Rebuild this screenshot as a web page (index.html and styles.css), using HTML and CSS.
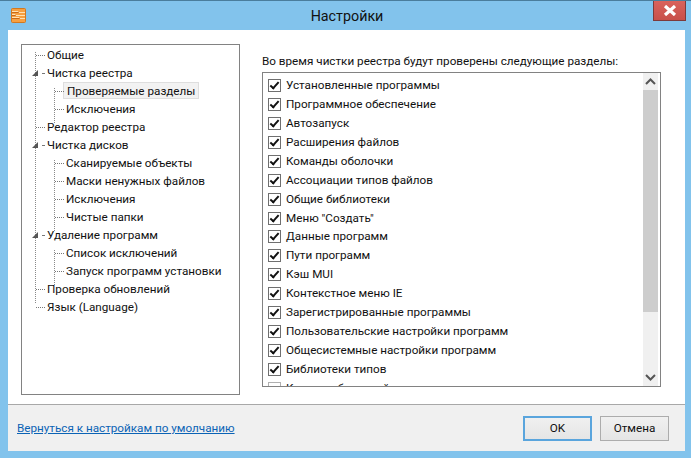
FILE: index.html
```html
<!DOCTYPE html>
<html>

<head>
    <meta charset="utf-8">
    <title>Настройки</title>
    <link rel="stylesheet" href="styles.css">
</head>

<body>
    <div class="window">
        <div class="titlebar">
            <svg class="app-icon" width="15" height="15" viewBox="0 0 15 15">
                <rect x="0.5" y="0.5" width="14" height="14" rx="1" fill="#f7a041" stroke="#d2781f"/>
                <path d="M1 4.5h13M1 7.5h13M1 10.5h13" fill="none" stroke="#c96a16" stroke-width="1"/>
                <path d="M1 3.5h6l1 1h6M1 6.5h3l1 1h9M1 9.5h7l1 1h5" fill="none" stroke="#ffe2b4" stroke-width="1"/>
            </svg>
            <div class="title">Настройки</div>
            <div class="close">
                <svg width="14" height="11" viewBox="0 0 14 11">
                    <path d="M2 1l10 9M12 1l-10 9" stroke="#fff" stroke-width="3.2" fill="none"/>
                </svg>
            </div>
        </div>
        <div class="content">
            <div class="main">
                <div class="tree">
                    <div class="branch">
                        <div class="node">Общие</div>
                        <div class="node open">Чистка реестра</div>
                        <div class="children">
                            <div class="node"><span class="selected">Проверяемые разделы</span></div>
                            <div class="node">Исключения</div>
                        </div>
                        <div class="node">Редактор реестра</div>
                        <div class="node open">Чистка дисков</div>
                        <div class="children">
                            <div class="node">Сканируемые объекты</div>
                            <div class="node">Маски ненужных файлов</div>
                            <div class="node">Исключения</div>
                            <div class="node">Чистые папки</div>
                        </div>
                        <div class="node open">Удаление программ</div>
                        <div class="children">
                            <div class="node">Список исключений</div>
                            <div class="node">Запуск программ установки</div>
                        </div>
                        <div class="node">Проверка обновлений</div>
                        <div class="node">Язык (Language)</div>
                    </div>
                </div>
                <div class="panel">
                    <div class="caption">Во время чистки реестра будут проверены следующие разделы:</div>
                    <div class="listbox">
                        <div class="items">
                            <div class="item"><span class="check"></span>Установленные программы</div>
                            <div class="item"><span class="check"></span>Программное обеспечение</div>
                            <div class="item"><span class="check"></span>Автозапуск</div>
                            <div class="item"><span class="check"></span>Расширения файлов</div>
                            <div class="item"><span class="check"></span>Команды оболочки</div>
                            <div class="item"><span class="check"></span>Ассоциации типов файлов</div>
                            <div class="item"><span class="check"></span>Общие библиотеки</div>
                            <div class="item"><span class="check"></span>Меню "Создать"</div>
                            <div class="item"><span class="check"></span>Данные программ</div>
                            <div class="item"><span class="check"></span>Пути программ</div>
                            <div class="item"><span class="check"></span>Кэш MUI</div>
                            <div class="item"><span class="check"></span>Контекстное меню IE</div>
                            <div class="item"><span class="check"></span>Зарегистрированные программы</div>
                            <div class="item"><span class="check"></span>Пользовательские настройки программ</div>
                            <div class="item"><span class="check"></span>Общесистемные настройки программ</div>
                            <div class="item"><span class="check"></span>Библиотеки типов</div>
                            <div class="item"><span class="check off"></span>Классы объектной модели</div>
                        </div>
                        <div class="scrollbar">
                            <div class="arrow">
                                <svg width="11" height="7" viewBox="0 0 11 7"><path d="M1 6l4.5-4.5L10 6" fill="none" stroke="#555" stroke-width="2"/></svg>
                            </div>
                            <div class="track"><div class="thumb"></div></div>
                            <div class="arrow">
                                <svg width="11" height="7" viewBox="0 0 11 7"><path d="M1 1l4.5 4.5L10 1" fill="none" stroke="#555" stroke-width="2"/></svg>
                            </div>
                        </div>
                    </div>
                </div>
            </div>
            <div class="footer">
                <a class="reset" href="#">Вернуться к настройкам по умолчанию</a>
                <div class="button default">OK</div>
                <div class="button">Отмена</div>
            </div>
        </div>
    </div>
</body>

</html>
```

FILE: styles.css
```css
html, body {
    margin: 0;
    height: 100%;
}

body {
    font-family: Roboto, sans-serif;
    font-size: 11.7px;
    color: #111111;
}

.window {
    box-sizing: border-box;
    width: 691px;
    height: 458px;
    padding: 0 6px 7px 8px;
    display: flex;
    flex-direction: column;
    background-color: #82c3ec;
    border-top: 1px solid #4a7d9c;
    overflow: hidden;
}

.titlebar {
    height: 29px;
    flex: none;
    display: flex;
    align-items: flex-start;
}

.app-icon {
    margin: 7px 0 0 3px;
}

.title {
    flex: 1;
    text-align: center;
    font-size: 14.3px;
    line-height: 30px;
    padding-left: 15px;
}

.close {
    width: 31px;
    height: 19px;
    margin-right: -1px;
    display: flex;
    align-items: center;
    justify-content: center;
    background-image: linear-gradient(#d9625c, #c8504a);
    border: 1px solid #7d3a3a;
    border-top: none;
}

.content {
    flex: 1;
    display: flex;
    flex-direction: column;
    background-color: #ffffff;
    min-height: 0;
}

.main {
    flex: 1;
    display: flex;
    padding: 14px 24px 8px 13px;
    gap: 22px;
    min-height: 0;
}

.tree {
    box-sizing: border-box;
    width: 219px;
    height: 351px;
    padding: 1px 0 0 13px;
    border: 1px solid #828282;
    flex: none;
}

.branch {
    background-image: linear-gradient(#8a8a8a 50%, transparent 50%);
    background-size: 1px 2px;
    background-repeat: repeat-y;
    height: 252px;
    margin-top: 6px;
}

.node {
    position: relative;
    height: 18px;
    line-height: 18px;
    padding-left: 12px;
    white-space: nowrap;
    top: -6px;
}

.node::before {
    content: "";
    position: absolute;
    left: 1px;
    top: 9px;
    width: 9px;
    border-top: 1px dotted #777777;
}

.node.open::before {
    left: 7px;
    width: 2px;
}

.node.open::after {
    content: "";
    position: absolute;
    left: -3px;
    top: 6px;
    border-style: solid;
    border-width: 0 0 6px 6px;
    border-color: transparent transparent #555555 transparent;
}

.children {
    margin-left: 19px;
    background-image: linear-gradient(#8a8a8a 50%, transparent 50%);
    background-size: 1px 2px;
    background-repeat: repeat-y;
}

.selected {
    display: inline-block;
    margin-left: -3px;
    padding: 0 3px;
    height: 17px;
    line-height: 16px;
    box-sizing: border-box;
    background-color: #f2f2f2;
    border: 1px solid #dedede;
}

.panel {
    flex: 1;
    display: flex;
    flex-direction: column;
    min-width: 0;
}

.caption {
    height: 14px;
    line-height: 14px;
    margin: 10px 0 4px 0;
    white-space: nowrap;
}

.listbox {
    box-sizing: border-box;
    height: 315px;
    display: flex;
    border: 1px solid #828282;
    overflow: hidden;
}

.items {
    flex: 1;
    padding: 3px 0 0 5px;
    overflow: hidden;
}

.item {
    height: 18.95px;
    line-height: 19px;
    display: flex;
    align-items: center;
    white-space: nowrap;
}

.check {
    box-sizing: border-box;
    width: 13px;
    height: 13px;
    margin-right: 5px;
    flex: none;
    border: 1px solid #6f6f6f;
    background-color: #ffffff;
    position: relative;
}

.check::after {
    content: "";
    position: absolute;
    left: 3px;
    top: 0;
    width: 3px;
    height: 7px;
    border: solid #111111;
    border-width: 0 2px 2px 0;
    transform: rotate(42deg);
}

.check.off {
    border-color: #b0b0b0;
}

.check.off::after {
    display: none;
}

.scrollbar {
    width: 15px;
    margin-right: 2px;
    flex: none;
    display: flex;
    flex-direction: column;
    background-color: #f0f0f0;
}

.arrow {
    height: 17px;
    flex: none;
    display: flex;
    align-items: center;
    justify-content: center;
}

.track {
    flex: 1;
}

.thumb {
    height: 222px;
    background-color: #cdcdcd;
}

.footer {
    box-sizing: border-box;
    height: 47px;
    flex: none;
    display: flex;
    align-items: center;
    padding: 0 16px 0 9px;
    background-color: #f0f0f0;
    border-top: 1px solid #a8a8a8;
    gap: 8px;
}

.reset {
    color: #0b63b5;
    margin-right: auto;
}

.button {
    box-sizing: border-box;
    width: 69px;
    height: 25px;
    line-height: 23px;
    text-align: center;
    background-image: linear-gradient(#f0f0f0, #e5e5e5);
    border: 1px solid #acacac;
}

.button.default {
    border: 2px solid #5aa5dd;
    line-height: 21px;
}
```
